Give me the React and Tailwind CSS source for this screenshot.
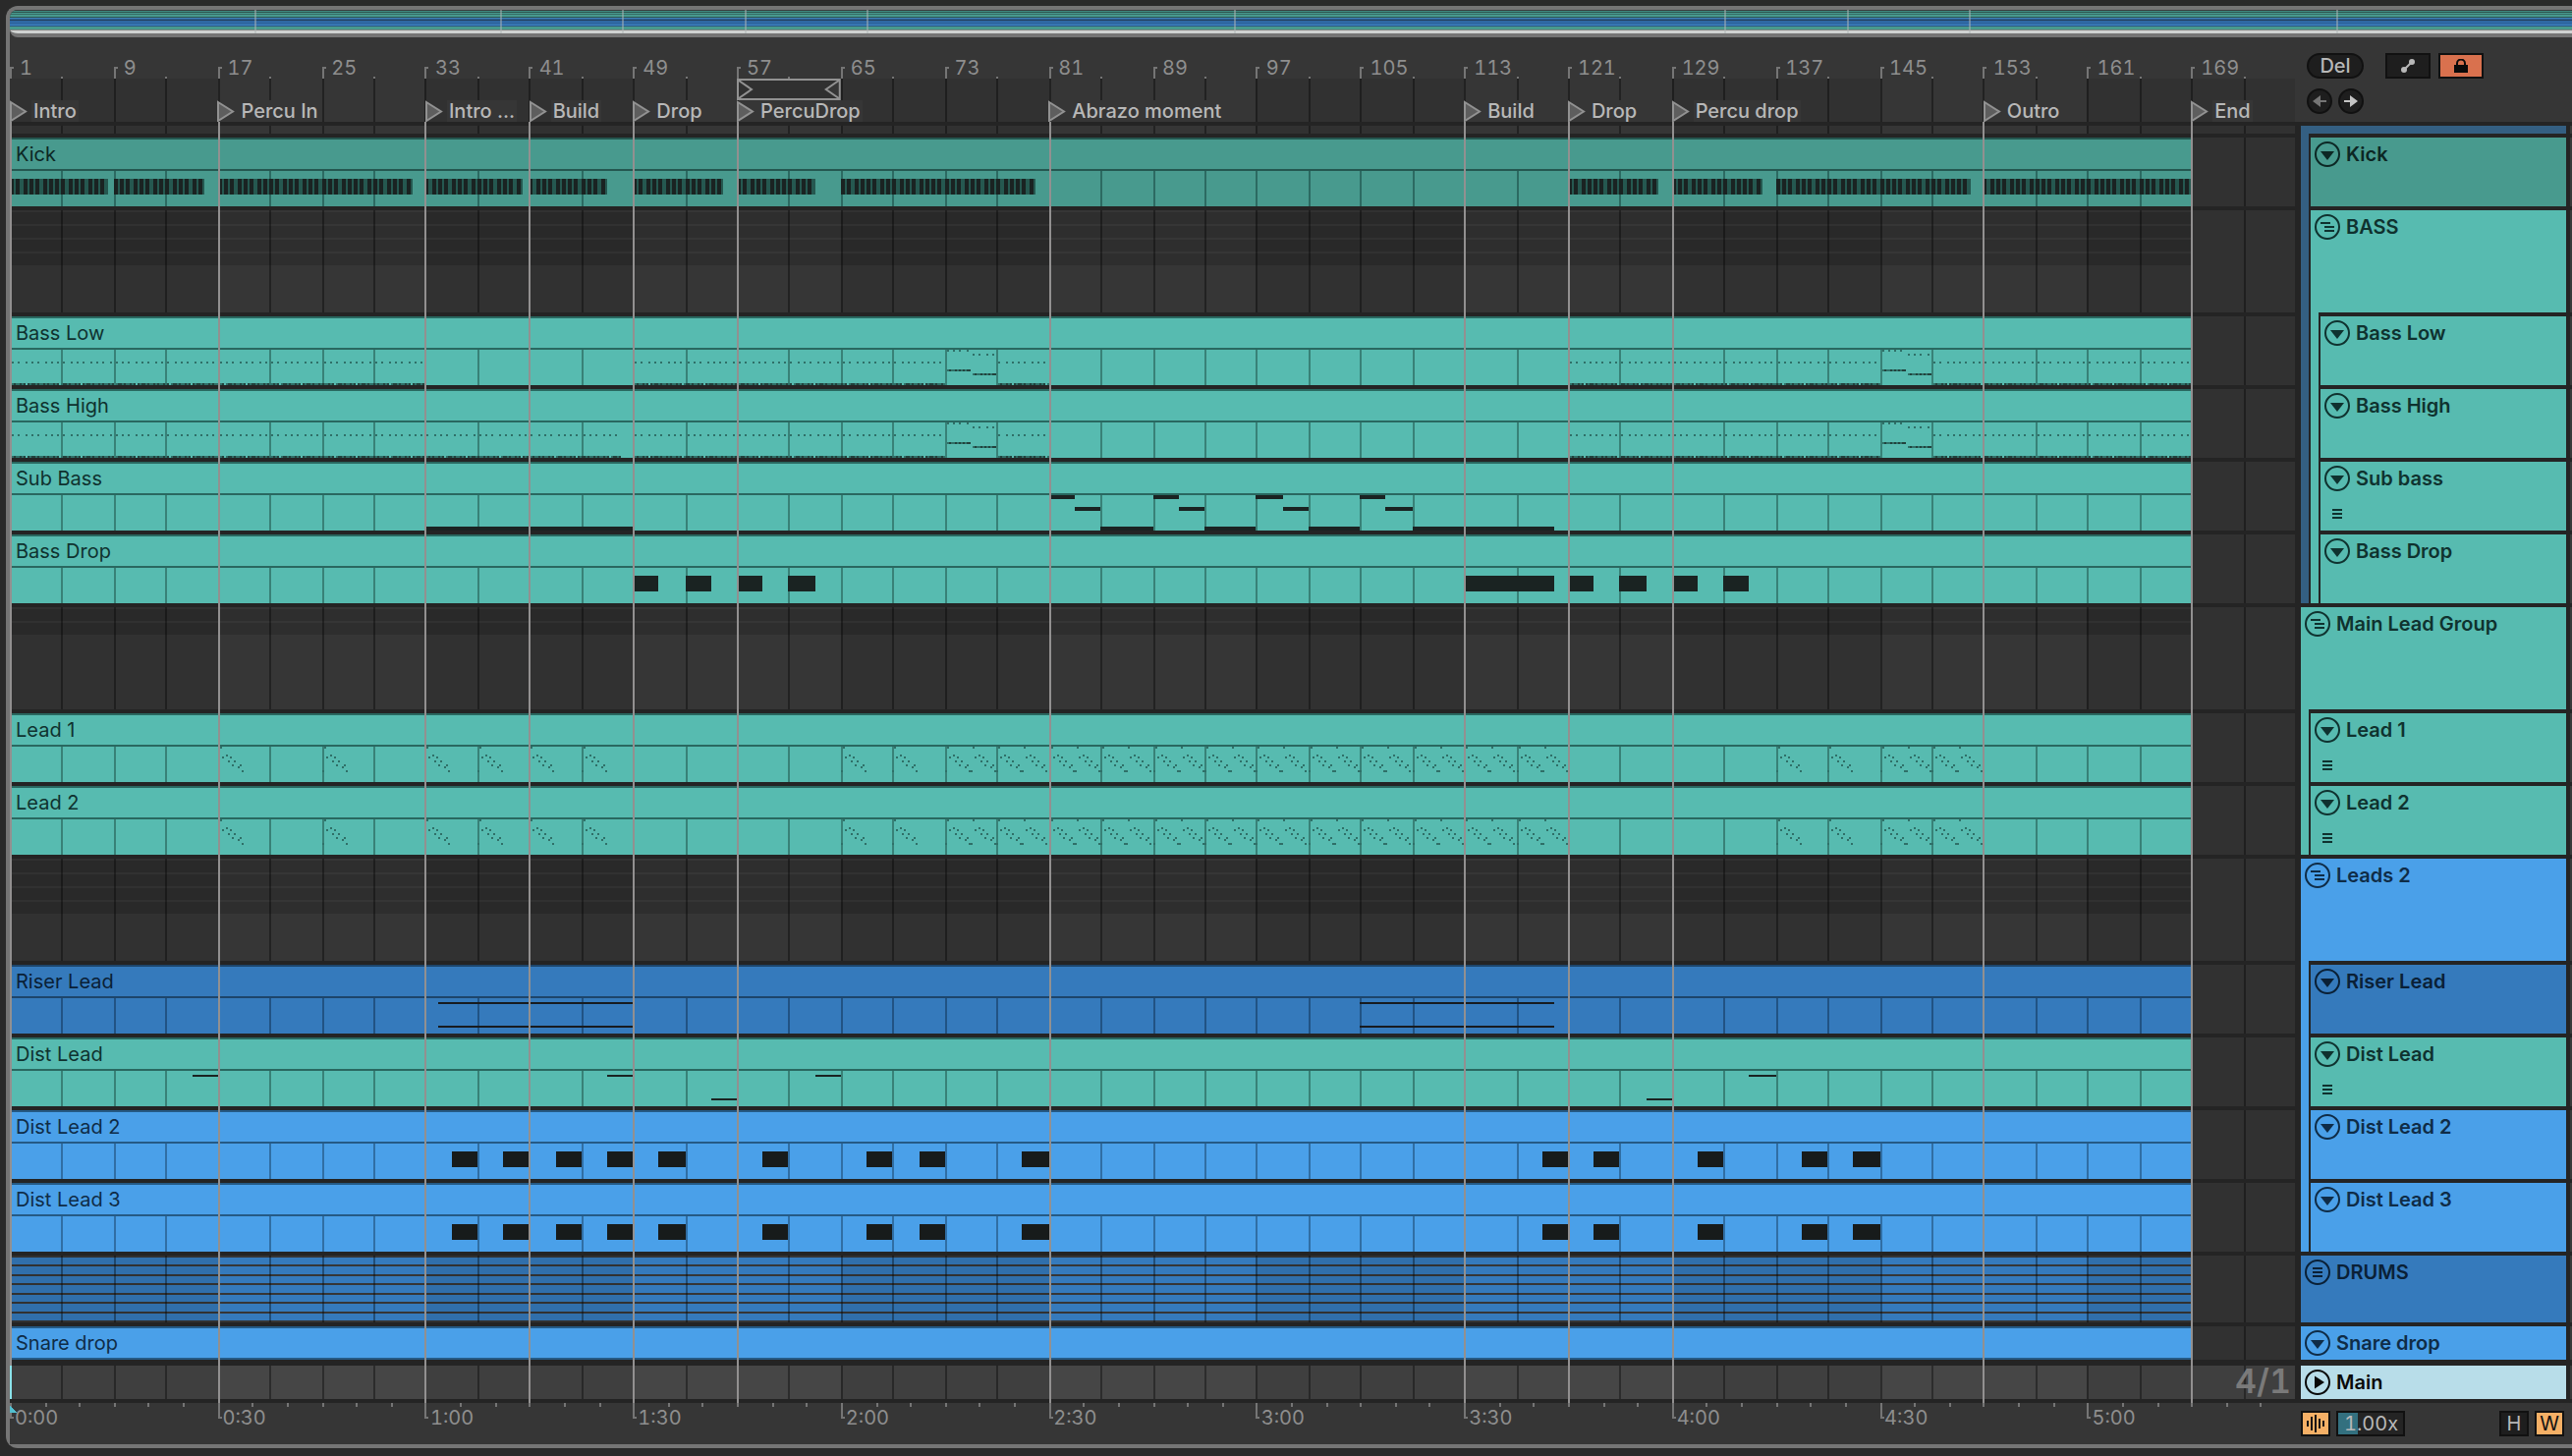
import React from "react";

const BAR = 2326 / 176;
const snap = (bar) => 2 * Math.round((bar * BAR) / 2);

const THEMES = {
  kick: { clip: "bg-[#489a8e]", edge: "border-[#245750]", text: "text-[#0c2724]", line: "#2c6a62", mid: "#255850", note: "#1a2322" },
  teal: { clip: "bg-[#57bbb0]", edge: "border-[#296860]", text: "text-[#0f322f]", line: "#388177", mid: "#2f7068", note: "#1a2322" },
  blue: { clip: "bg-[#4aa0e9]", edge: "border-[#255a85]", text: "text-[#0f2c47]", line: "#306ea4", mid: "#2a608e", note: "#171b1b" },
  navy: { clip: "bg-[#357abc]", edge: "border-[#1d456b]", text: "text-[#0a2036]", line: "#215384", mid: "#1d456b", note: "#171b1f" },
};

const LOCATORS = [
  [1, "Intro"], [3, "Percu In"], [5, "Intro ..."], [6, "Build"], [7, "Drop"], [8, "PercuDrop"],
  [11, "Abrazo moment"], [15, "Build"], [16, "Drop"], [17, "Percu drop"], [20, "Outro"], [22, "End"],
];
const BAR_LABELS = Array.from({ length: 22 }, (_, i) => i * 8 + 1);
const TIME_LABELS = ["0:00", "0:30", "1:00", "1:30", "2:00", "2:30", "3:00", "3:30", "4:00", "4:30", "5:00"];
const FOURS = Array.from({ length: 43 }, (_, i) => (i + 1) * 4);

/* ---- note generators: [x, y, width, height, tone] ---- */
const span = (a, b, y, h, tone = "note") => [snap(a), y, snap(b) - snap(a), h, tone];

const kickNotes = [
  [0, 7.5], [8, 15], [16, 31], [32, 39.5], [40, 46], [48, 55], [56, 62], [64, 79],
  [120, 127], [128, 135], [136, 151], [152, 168],
].flatMap(([a, b]) => {
  const out = [span(a, b, 8, 16, "mid")];
  for (let t = a; t < b; t += 0.5) out.push([snap(t), 8, 4, 16, "note"]);
  return out;
});

const dots = (a, b, y) => {
  const out = [];
  for (let t = a; t < b; t += 0.5) out.push([snap(t) + 2, y, 2, 2, "mid"]);
  return out;
};
const ROLL = "mdmmdmd.dmddmdmmdmdmmdmd.mdd";
const roll = (a, b, y, solid) => {
  const out = [];
  for (let x = snap(a) + 2, i = 0; x < snap(b); x += 2, i++) {
    const c = ROLL[i % ROLL.length];
    if (c === "." && !solid) continue;
    out.push([x, y, 2, 2, "mid"]);
    if (c === "d") out.push([x, y, 2, 2, "soft"]);
  }
  return out;
};
const riff = (a, b) => [...dots(a, b, 12), ...roll(a, b, 34)];
const turn = (a) => [...dots(a, a + 2, 0), ...dots(a + 2, a + 4, 4), ...roll(a, a + 2, 20, true), ...roll(a + 2, a + 4, 24, true)];
const tail = [...riff(48, 72), ...turn(72), ...riff(76, 80), ...riff(120, 144), ...turn(144), ...riff(148, 168)];
const bassLow = [...riff(0, 32), ...tail];
const bassHigh = [...riff(0, 47), ...tail];

const subBass = [
  span(32, 48, 32, 4),
  ...[80, 88, 96, 104].flatMap((a) => [span(a, a + 2, 0, 4), span(a + 2, a + 4, 12, 4)]),
  span(84, 88, 32, 4), span(92, 96, 32, 4), span(100, 104, 32, 4), span(108, 119, 32, 4),
];
const bassDrop = [[48, 50], [52, 54], [56, 58], [60, 62], [112, 119], [120, 122], [124, 126], [128, 130], [132, 134]].map(
  ([a, b]) => span(a, b, 8, 16)
);

const ARP = [[2, 0], [4, 10], [8, 8], [12, 10], [10, 14], [16, 14], [14, 18], [22, 18], [20, 20], [24, 24]];
const arp = (x, first) => [...(first ? [[x, 24, 2, 2, "mid"]] : []), ...ARP.map(([dx, dy]) => [x + dx, dy, 2, 2, "mid"])];
const lead = [
  ...[16, 24, 32, 36, 40, 44, 64, 68, 136, 140].flatMap((b) => arp(snap(b), true)),
  ...[72, 76, 80, 84, 88, 92, 96, 100, 104, 108, 112, 116, 144, 148].flatMap((b) => [
    ...arp(snap(b), true), [snap(b) + 26, 24, 2, 2, "mid"], ...arp(snap(b) + 26, false),
  ]),
];
const riser = [[33, 48], [104, 119]].flatMap(([a, b]) => [span(a, b, 4, 2), span(a, b, 28, 2)]);
const distLead = [[14, 4], [46, 4], [54, 28], [62, 4], [126, 28], [134, 4]].map(([a, y]) => span(a, a + 2, y, 2));
const stabs = [34, 38, 42, 46, 50, 58, 66, 70, 78, 118, 122, 130, 138, 142].map((a) => span(a, a + 2, 8, 16));

/* ---- timeline pieces ---- */
const rectsPath = (rects) => rects.map(([x, y, w, h]) => `M${x} ${y}h${w}v${h}h${-w}z`).join("");

function Grid() {
  const dark = [0, 32, 64, 96, 128, 160].map((b) => [snap(b), 0, snap(b + 16) - snap(b), 10]);
  return (
    <svg className="absolute inset-0 size-full" viewBox="0 0 2326 10" preserveAspectRatio="none" shapeRendering="crispEdges" aria-hidden="true">
      <path d={rectsPath(dark)} fill="#000" fillOpacity="0.09" />
      <path d={rectsPath(FOURS.map((b) => [snap(b), 0, 2, 10]))} fill="#000" fillOpacity="0.36" />
    </svg>
  );
}

function Notes({ notes, theme }) {
  const pick = (tone) => rectsPath(notes.filter((n) => n[4] === tone));
  return (
    <svg className="block h-9 w-full" viewBox="0 0 2220 36" preserveAspectRatio="none" shapeRendering="crispEdges" aria-hidden="true">
      <path d={rectsPath(FOURS.filter((b) => b < 168).map((b) => [snap(b), 0, 2, 36]))} fill={theme.line} />
      <path d={pick("mid")} fill={theme.mid} />
      <path d={pick("soft")} fill="#1a2322" fillOpacity="0.6" />
      <path d={pick("note")} fill={theme.note} />
    </svg>
  );
}

function Lane({ children, className = "" }) {
  return <div className={`relative bg-[#363636] ${className}`}>{children}</div>;
}

function Clip({ name, tone, notes }) {
  const theme = THEMES[tone];
  return (
    <Lane>
      <Grid />
      <div className="relative grid grid-cols-[repeat(22,minmax(0,1fr))]">
        <div className={`col-span-21 ${theme.clip}`}>
          <div className={`border-y-2 pl-1.5 text-xl leading-[30px] ${theme.edge} ${theme.text}`}>{name}</div>
          {notes && <Notes notes={notes} theme={theme} />}
        </div>
      </div>
    </Lane>
  );
}

function GroupLane({ count }) {
  return (
    <Lane className="h-[104px]">
      <div className="grid grid-cols-[repeat(22,minmax(0,1fr))] pt-0.5">
        <div className="col-span-21 flex flex-col gap-0.5">
          {Array.from({ length: count }, (_, i) => (
            <div key={i} className="h-3 bg-[#2e2e2e]" />
          ))}
        </div>
      </div>
      <Grid />
    </Lane>
  );
}

function DrumLane() {
  return (
    <Lane className="h-[68px]">
      <div className="grid h-full grid-cols-[repeat(22,minmax(0,1fr))]">
        <div className="col-span-21 flex flex-col gap-0.5 py-0.5">
          {Array.from({ length: 7 }, (_, i) => (
            <div key={i} className="flex-1 bg-[#357abc]" />
          ))}
        </div>
      </div>
      <Grid />
    </Lane>
  );
}

function Ruler() {
  const major = BAR_LABELS.map((_, i) => snap(i * 8));
  return (
    <div className="relative flex h-[42px] items-end">
      <svg className="absolute inset-0 size-full" viewBox="0 0 2326 42" preserveAspectRatio="none" shapeRendering="crispEdges" aria-hidden="true">
        <path
          fill="#757575"
          d={rectsPath([...major.map((x) => [x, 30, 2, 12]), ...major.map((x) => [x, 30, 4, 2]), ...major.map((x, i) => [snap(i * 8 + 4), 40, 2, 2])])}
        />
      </svg>
      <div className="relative grid w-full grid-cols-[repeat(22,minmax(0,1fr))] text-xl leading-[22px] text-[#8e8e8e] tabular-nums">
        {BAR_LABELS.map((n) => (
          <span key={n} className="pl-2.5">{n}</span>
        ))}
      </div>
    </div>
  );
}

function Locators() {
  return (
    <div className="relative bg-[#363636]">
      <Grid />
      <div className="relative grid h-[22px] grid-cols-[repeat(22,minmax(0,1fr))]">
        <svg className="col-start-8 size-full" viewBox="0 0 106 22" preserveAspectRatio="none" fill="none" stroke="#929292" strokeWidth="2" aria-hidden="true">
          <path d="M1 1h104v20H1zM2 2l13 9-13 9M104 2L91 11l13 9" fill="#303030" />
        </svg>
      </div>
      <div className="relative grid grid-cols-[repeat(22,minmax(0,1fr))] text-xl leading-[22px] font-medium text-[#b8b8b8]">
        {LOCATORS.map(([col, name]) => (
          <a key={col} href={`#locator-${col}`} className="row-start-1 flex gap-1 whitespace-nowrap" style={{ gridColumnStart: col }}>
            <svg className="h-[22px] w-[18px] shrink-0" viewBox="0 0 18 22" aria-hidden="true">
              <path d="M1 2l15 9.500L1 21z" fill="#5e5e5e" stroke="#929292" strokeWidth="2" />
            </svg>
            <span className="bg-[#363636] px-0.5">{name}</span>
          </a>
        ))}
      </div>
    </div>
  );
}

function TimeRuler() {
  const major = TIME_LABELS.map((_, i) => snap(i * 16));
  const minor = Array.from({ length: 66 }, (_, i) => snap((i * 8) / 3));
  return (
    <div className="relative h-[42px] bg-[#363636] pt-1">
      <svg className="absolute inset-0 size-full" viewBox="0 0 2326 42" preserveAspectRatio="none" shapeRendering="crispEdges" aria-hidden="true">
        <path fill="#757575" d={rectsPath([...minor.map((x) => [x, 0, 2, 4]), ...major.map((x) => [x, 0, 2, 16]), ...major.map((x) => [x, 14, 4, 2])])} />
        <path fill="#52bfd0" d="M0 2l7 8H0z" />
      </svg>
      <div className="relative grid grid-cols-[repeat(11,minmax(0,1fr))] text-xl leading-[22px] text-[#8e8e8e] tabular-nums">
        {TIME_LABELS.map((t) => (
          <span key={t} className="pl-[5px]">{t}</span>
        ))}
      </div>
    </div>
  );
}

function Timeline() {
  return (
    <div className="min-w-0 flex-1">
      <Ruler />
      <Locators />
      <div className="relative flex flex-col gap-1 bg-[#242424] py-1">
        <Lane className="h-2"><Grid /></Lane>
        <Clip name="Kick" tone="kick" notes={kickNotes} />
        <GroupLane count={4} />
        <Clip name="Bass Low" tone="teal" notes={bassLow} />
        <Clip name="Bass High" tone="teal" notes={bassHigh} />
        <Clip name="Sub Bass" tone="teal" notes={subBass} />
        <Clip name="Bass Drop" tone="teal" notes={bassDrop} />
        <GroupLane count={2} />
        <Clip name="Lead 1" tone="teal" notes={lead} />
        <Clip name="Lead 2" tone="teal" notes={lead} />
        <GroupLane count={4} />
        <Clip name="Riser Lead" tone="navy" notes={riser} />
        <Clip name="Dist Lead" tone="teal" notes={distLead} />
        <Clip name="Dist Lead 2" tone="blue" notes={stabs} />
        <Clip name="Dist Lead 3" tone="blue" notes={stabs} />
        <DrumLane />
        <Clip name="Snare drop" tone="blue" />
        <div className="relative mt-0.5 h-[34px] bg-[#464646]">
          <Grid />
          <div className="relative flex justify-end pr-1 text-[34px] leading-8 font-semibold text-[#7a7a7a] tabular-nums">4/1</div>
        </div>
        <svg className="pointer-events-none absolute inset-0 size-full" viewBox="0 0 2326 10" preserveAspectRatio="none" shapeRendering="crispEdges" aria-hidden="true">
          <path d={rectsPath(LOCATORS.slice(1).map(([c]) => [snap((c - 1) * 8), 0, 2, 10]))} fill="#929090" />
        </svg>
        <div className="pointer-events-none absolute inset-y-0 left-0 flex w-0.5 flex-col pb-1">
          <div className="flex-1 bg-[#929090]" />
          <div className="h-[34px] bg-[#8be3ea]" />
        </div>
      </div>
      <TimeRuler />
    </div>
  );
}

/* ---- track headers ---- */
const GLYPHS = {
  fold: <path d="M6 10h14l-7 9z" fill="currentColor" />,
  group: <path d="M6 9h10M10 13h10M10 17h10" stroke="currentColor" strokeWidth="2" />,
  lines: <path d="M8 9h10M8 13h10M8 17h10" stroke="currentColor" strokeWidth="2" />,
  play: <path d="M10 6.500l10 6.500-10 6.500z" fill="currentColor" />,
};

function Header({ name, tone, icon = "fold", extra, size = "h-[70px]", paint }) {
  return (
    <div className={`p-1 ${size} ${paint || `${THEMES[tone].clip} ${THEMES[tone].text}`}`}>
      <div className="flex items-center gap-1.5">
        <button type="button" aria-label={`Fold ${name}`} className="size-[26px]">
          <svg viewBox="0 0 26 26" className="size-[26px]" fill="none" aria-hidden="true">
            <circle cx="13" cy="13" r="12" stroke="currentColor" strokeWidth="2" />
            {GLYPHS[icon]}
          </svg>
        </button>
        <span className="text-xl leading-[26px] font-semibold">{name}</span>
      </div>
      {extra && (
        <button type="button" aria-label={`Take lanes of ${name}`} className="mt-[18px] ml-2 block">
          <svg viewBox="0 0 10 10" className="size-2.5" aria-hidden="true">
            <path d="M0 1h10M0 5h10M0 9h10" stroke="currentColor" strokeWidth="2" />
          </svg>
        </button>
      )}
    </div>
  );
}

function Group({ paint, head, children }) {
  return (
    <div className={paint}>
      {head}
      <div className="pl-2">
        <div className="flex flex-col gap-1 bg-[#242424] pt-1 pl-0.5">{children}</div>
      </div>
    </div>
  );
}

function Headers() {
  return (
    <div className="flex flex-1 flex-col gap-1">
      <Group paint="bg-[#345f82]" head={<div className="h-2" />}>
        <Header name="Kick" tone="kick" />
        <Group paint="bg-[#57bbb0]" head={<Header name="BASS" tone="teal" icon="group" size="h-[104px]" />}>
          <Header name="Bass Low" tone="teal" />
          <Header name="Bass High" tone="teal" />
          <Header name="Sub bass" tone="teal" extra />
          <Header name="Bass Drop" tone="teal" />
        </Group>
      </Group>
      <Group paint="bg-[#57bbb0]" head={<Header name="Main Lead Group" tone="teal" icon="group" size="h-[104px]" />}>
        <Header name="Lead 1" tone="teal" extra />
        <Header name="Lead 2" tone="teal" extra />
      </Group>
      <Group paint="bg-[#4aa0e9]" head={<Header name="Leads 2" tone="blue" icon="group" size="h-[104px]" />}>
        <Header name="Riser Lead" tone="navy" />
        <Header name="Dist Lead" tone="teal" extra />
        <Header name="Dist Lead 2" tone="blue" />
        <Header name="Dist Lead 3" tone="blue" />
      </Group>
      <Header name="DRUMS" tone="navy" icon="lines" size="h-[68px]" />
      <Header name="Snare drop" tone="blue" size="h-[34px]" />
      <div className="mt-0.5">
        <Header name="Main" icon="play" size="h-[34px]" paint="bg-[#b8dde9] text-[#0a0a0a]" />
      </div>
    </div>
  );
}

const LANE_EDGES = [
  "h-2", "h-[70px]", "h-[104px]", "h-[70px]", "h-[70px]", "h-[70px]", "h-[70px]", "h-[104px]", "h-[70px]", "h-[70px]",
  "h-[104px]", "h-[70px]", "h-[70px]", "h-[70px]", "h-[70px]", "h-[68px]", "h-[34px]", "mt-0.5 h-[34px]",
];

function Sidebar() {
  return (
    <div className="w-[282px] shrink-0">
      <div className="flex h-[86px] flex-col gap-2.5 pt-4 pl-3">
        <div className="flex text-xl leading-[22px] font-medium text-[#b8b8b8]">
          <button type="button" className="h-[26px] w-[58px] rounded-full border-2 border-[#111] bg-[#1e1e1e]">Del</button>
          <button type="button" aria-label="Automation mode" className="ml-[22px] flex h-[26px] w-[46px] items-center justify-center border-2 border-[#111] bg-[#1e1e1e]">
            <svg viewBox="0 0 16 16" className="size-4" aria-hidden="true">
              <path d="M4 12l8-8" stroke="#b8b8b8" strokeWidth="2" />
              <circle cx="4" cy="12" r="3" fill="#b8b8b8" />
              <circle cx="12" cy="4" r="3" fill="#b8b8b8" />
            </svg>
          </button>
          <button type="button" aria-label="Lock envelopes" className="ml-2 flex h-[26px] w-[46px] items-center justify-center border-2 border-[#111] bg-[#d9714e]">
            <svg viewBox="0 0 14 14" className="size-3.5" aria-hidden="true">
              <path d="M3 7V4.500a4 4 0 0 1 8 0V7" fill="none" stroke="#0a0a0a" strokeWidth="2" />
              <path d="M0 6h14v8H0z" fill="#0a0a0a" />
            </svg>
          </button>
        </div>
        <div className="flex gap-1.5">
          <button type="button" aria-label="Previous locator" className="flex size-[26px] items-center justify-center rounded-full border-2 border-[#111] bg-[#1e1e1e] text-[#757575]">
            <svg viewBox="0 0 14 12" className="h-3 w-3.5" aria-hidden="true">
              <path d="M0 6l8-6v12zM7 5h7v2H7z" fill="currentColor" />
            </svg>
          </button>
          <button type="button" aria-label="Next locator" className="flex size-[26px] items-center justify-center rounded-full border-2 border-[#111] bg-[#1e1e1e] text-[#c4c4c4]">
            <svg viewBox="0 0 14 12" className="h-3 w-3.5" aria-hidden="true">
              <path d="M14 6L6 0v12zM7 5H0v2h7z" fill="currentColor" />
            </svg>
          </button>
        </div>
      </div>
      <div className="flex gap-1 bg-[#242424] py-1 pl-1.5">
        <Headers />
        <div className="flex w-0.5 flex-col gap-1">
          {LANE_EDGES.map((h, i) => (
            <div key={i} className={`bg-[#393939] ${h}`} />
          ))}
        </div>
      </div>
      <div className="flex h-[42px] bg-[#363636] pt-2 pr-2 pl-1.5 text-xl leading-[22px] text-[#b8b8b8]">
        <button type="button" aria-label="Waveform zoom" className="flex h-[26px] w-[30px] items-center justify-center border-2 border-[#111] bg-[#f5b066]">
          <svg viewBox="0 0 18 18" className="size-[18px]" stroke="#151515" strokeWidth="2" aria-hidden="true">
            <path d="M1 6v6M5 2v14M9 0v18M13 4v10M17 6v6" />
          </svg>
        </button>
        <input
          type="text"
          aria-label="Zoom factor"
          defaultValue="1.00x"
          className="ml-1.5 h-[26px] w-[70px] border-2 border-[#111] bg-[#242424] bg-[linear-gradient(#33707f,#33707f)] bg-[length:20px_100%] bg-no-repeat pl-1.5 leading-[22px] tabular-nums"
        />
        <button type="button" className="ml-auto h-[26px] w-[30px] border-2 border-[#111] bg-[#1e1e1e]">H</button>
        <button type="button" className="ml-1.5 h-[26px] w-[30px] border-2 border-[#111] bg-[#f5b066] text-[#111]">W</button>
      </div>
    </div>
  );
}

/* ---- song overview ---- */
const STRIPES = [
  "#3a3d3d", "#3f8b80", "#2d5650", "#489a8e", "#356c65", "#489a8e", "#489a8e", "#2d5650", "#3f7fb5", "#2c6296", "#24405c", "#2f68a3",
  "#2f68a3", "#2f68a3", "#2f68a3", "#3f87c6", "#2a5480", "#489a8e", "#489a8e", "#489a8e", "#7d8280", "#cfd2d1", "#cfd2d1", "#cfd2d1",
];

function Overview() {
  return (
    <div className="h-7 overflow-hidden rounded-l-lg border-b-4 border-[#757575]">
      <svg className="block h-6 w-full" viewBox="0 0 2608 24" preserveAspectRatio="none" shapeRendering="crispEdges" aria-hidden="true">
        {STRIPES.map((c, i) => (
          <rect key={i} x="0" y={i} width="2608" height="1" fill={c} />
        ))}
        {[16, 32, 40, 48, 56, 80, 112, 120, 128, 152].map((b) => (
          <rect key={b} x={Math.round(b * 15.58)} y="0" width="2" height="24" fill="#b0b5b5" fillOpacity="0.5" />
        ))}
      </svg>
    </div>
  );
}

export default function App() {
  return (
    <div className="min-h-screen overflow-hidden bg-[#2a2a2a] pt-1.5 pb-2 pl-1.5 font-['Inter',sans-serif]">
      <div className="rounded-l-xl border-4 border-r-0 border-[#757575] bg-[#363636]">
        <Overview />
        <div className="flex">
          <Timeline />
          <Sidebar />
        </div>
      </div>
    </div>
  );
}
